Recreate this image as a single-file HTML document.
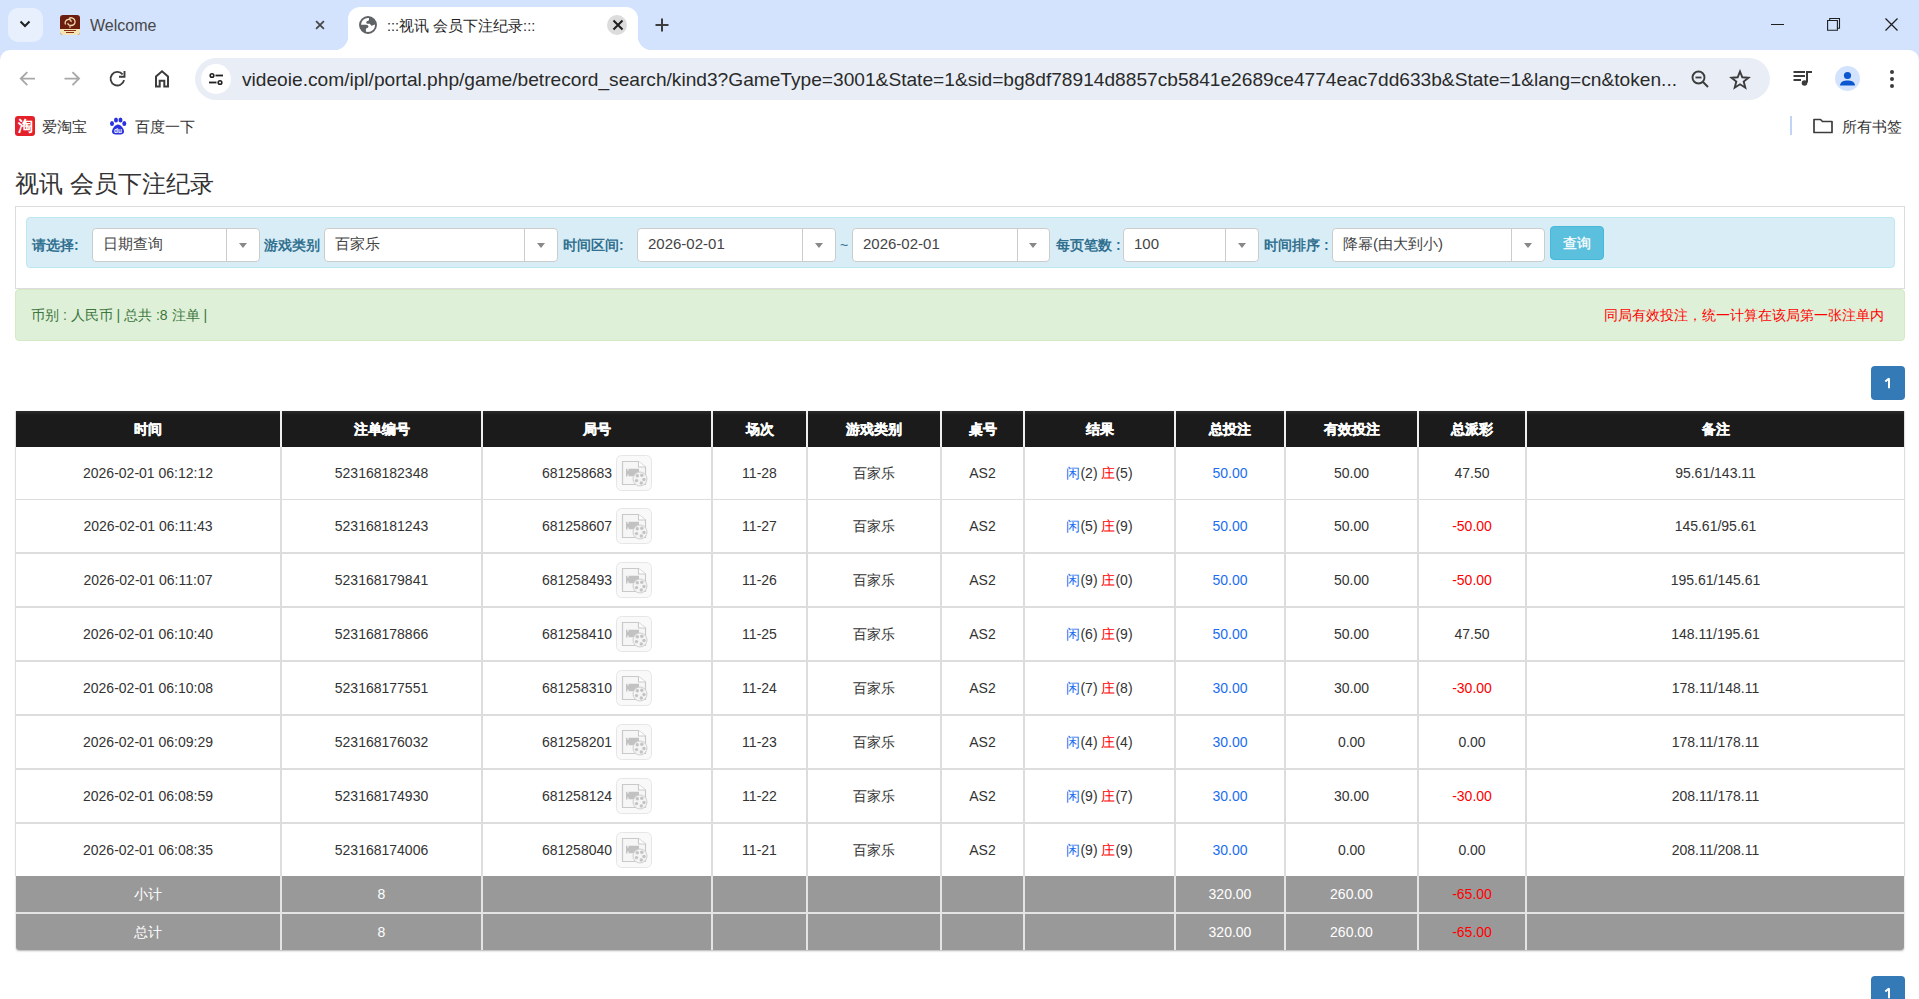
<!DOCTYPE html>
<html><head><meta charset="utf-8">
<style>
*{box-sizing:border-box;margin:0;padding:0}
html,body{width:1919px;height:999px;overflow:hidden;background:#fff;font-family:"Liberation Sans",sans-serif;color:#333}
.a{position:absolute}
#tabs{left:0;top:0;width:1919px;height:50px;background:#d3e3fd}
.ui{font-family:"Liberation Sans",sans-serif;white-space:nowrap}
</style></head><body>
<!-- ===== Browser chrome ===== -->
<div id="tabs" class="a" style="height:62px"></div>
<div class="a" style="left:0;top:50px;width:1919px;height:20px;background:#fff;border-radius:10px 10px 0 0"></div>
<!-- tab dropdown -->
<div class="a" style="left:8px;top:8px;width:35px;height:34px;border-radius:10px;background:#e8f0fe"></div>
<svg class="a" style="left:17px;top:16px" width="16" height="16" viewBox="0 0 16 16"><path d="M3.5 5.5 L8 10 L12.5 5.5" fill="none" stroke="#1f1f1f" stroke-width="2"/></svg>
<!-- welcome favicon -->
<div class="a" style="left:60px;top:15px;width:20px;height:20px;border-radius:3px;background:#6b1d0e"></div>
<div class="a" style="left:60px;top:29px;width:20px;height:6px;border-radius:0 0 3px 3px;background:#f3e3b5"></div>
<svg class="a" style="left:60px;top:15px" width="20" height="20" viewBox="0 0 20 20"><path d="M5.5 9.5C4.5 7.5 5.5 5 8 4.5C10 4 11.5 5.5 11 7M9 3.5C11 2 14.5 3 15 6C15.5 8.5 13.5 10.5 11 10.5C9 10.5 7.5 9.5 8 8" fill="none" stroke="#f0d9b0" stroke-width="1.3"/><path d="M10 10.5V13" stroke="#f0d9b0" stroke-width="1"/><path d="M4 15.5H16M6 17.5H14" stroke="#8a2a10" stroke-width="1"/></svg>
<div class="a ui" style="left:90px;top:17px;font-size:16px;color:#474747">Welcome</div>
<svg class="a" style="left:312px;top:17px" width="16" height="16" viewBox="0 0 16 16"><path d="M4.1 4.1L11.9 11.9M11.9 4.1L4.1 11.9" stroke="#474747" stroke-width="1.8"/></svg>
<!-- active tab -->
<div class="a" style="left:348px;top:7px;width:290px;height:43px;background:#fff;border-radius:12px 12px 0 0"></div>
<div class="a" style="left:334px;top:36px;width:14px;height:14px;background:radial-gradient(circle at 0 0,#d3e3fd 14px,#fff 14.5px)"></div>
<div class="a" style="left:638px;top:36px;width:14px;height:14px;background:radial-gradient(circle at 100% 0,#d3e3fd 14px,#fff 14.5px)"></div>

<!-- globe -->
<svg class="a" style="left:356px;top:13px" width="24" height="24" viewBox="0 0 24 24"><defs><clipPath id="gc"><circle cx="12" cy="12" r="8"/></clipPath></defs><circle cx="12" cy="12" r="8" fill="#fff" stroke="#5f6368" stroke-width="1.9"/><g clip-path="url(#gc)" fill="#5f6368"><path d="M13 2V6.6C13 7.5 12.5 7.9 11.7 7.9C10.9 7.9 10.3 8.6 10.3 9.4C10.3 10.2 11 10.7 11.8 10.7H13.2C14 10.7 14.4 11.2 14.6 11.8C14.9 12.5 15.6 12.8 16.4 12.6C18 12.2 19.5 11.5 21 10.5V2Z"/><path d="M2 11.8H10.2C11.4 11.8 12.4 12.5 12.4 13.6C12.4 14.6 11.6 15.2 10.8 15.2C10.1 15.2 9.9 15.9 9.9 16.6V22H2Z"/></g></svg>
<div class="a ui" style="left:387px;top:16.5px;font-size:14.5px;color:#1f1f1f">:::视讯 会员下注纪录:::</div>
<div class="a" style="left:607px;top:15px;width:20px;height:20px;border-radius:10px;background:#dcdcdc"></div>
<svg class="a" style="left:610px;top:17px" width="16" height="16" viewBox="0 0 16 16"><path d="M3.5 3.5L12.5 12.5M12.5 3.5L3.5 12.5" stroke="#1f1f1f" stroke-width="2"/></svg>
<svg class="a" style="left:654px;top:17px" width="16" height="16" viewBox="0 0 16 16"><path d="M8 1.5V14.5M1.5 8H14.5" stroke="#3c3c3c" stroke-width="2"/></svg>
<!-- window controls -->
<div class="a" style="left:1771px;top:24px;width:13px;height:1px;background:#1f1f1f"></div>
<svg class="a" style="left:1825px;top:16px" width="17" height="17" viewBox="0 0 17 17"><path d="M2.6 4.5H12.4V14.3H2.6Z" fill="none" stroke="#1f1f1f" stroke-width="1.1"/><path d="M4.7 4.5V2.5H14.5V12.2H12.4" fill="none" stroke="#1f1f1f" stroke-width="1.1"/></svg>
<svg class="a" style="left:1883px;top:16px" width="17" height="17" viewBox="0 0 17 17"><path d="M2.5 2.5L14.5 14.5M14.5 2.5L2.5 14.5" stroke="#1f1f1f" stroke-width="1.3"/></svg>
<!-- toolbar -->
<svg class="a" style="left:17px;top:68px" width="20" height="20" viewBox="0 0 20 20"><path d="M18 10.6H4.3M10.3 4.1L3.8 10.6L10.3 17.1" fill="none" stroke="#a8a8a8" stroke-width="1.9"/></svg>
<svg class="a" style="left:61px;top:68px" width="20" height="20" viewBox="0 0 20 20"><path d="M3.5 10.6H17.5M11.5 4.1L18 10.6L11.5 17.1" fill="none" stroke="#a8a8a8" stroke-width="1.9"/></svg>
<svg class="a" style="left:107px;top:68px" width="20" height="20" viewBox="0 0 20 20"><path d="M17.05 12.1 A6.8 6.8 0 1 1 15.6 6.33" fill="none" stroke="#3c3c3c" stroke-width="1.9"/><path d="M12 8.8H17.5V3" fill="none" stroke="#3c3c3c" stroke-width="1.9"/></svg>
<svg class="a" style="left:152px;top:68px" width="20" height="22" viewBox="0 0 20 22"><path d="M4 18.6V8.5L10 3.3L16 8.5V18.6H12.3V12.7H7.7V18.6Z" fill="none" stroke="#3c3c3c" stroke-width="2" stroke-linejoin="miter"/></svg>
<div class="a" style="left:195px;top:58px;width:1575px;height:42px;border-radius:21px;background:#e9eef6"></div>
<div class="a" style="left:201px;top:64px;width:30px;height:30px;border-radius:15px;background:#fff"></div>
<svg class="a" style="left:206px;top:69px" width="20" height="20" viewBox="0 0 20 20"><circle cx="6" cy="6.5" r="1.8" fill="none" stroke="#1f1f1f" stroke-width="1.6"/><path d="M9.5 6.5H17" stroke="#1f1f1f" stroke-width="1.8"/><circle cx="14" cy="13.5" r="1.8" fill="none" stroke="#1f1f1f" stroke-width="1.6"/><path d="M3 13.5H10.5" stroke="#1f1f1f" stroke-width="1.8"/></svg>
<div class="a ui" style="left:242px;top:69px;font-size:19.15px;color:#2a2a2a">videoie.com/ipl/portal.php/game/betrecord_search/kind3?GameType=3001&amp;State=1&amp;sid=bg8df78914d8857cb5841e2689ce4774eac7dd633b&amp;State=1&amp;lang=cn&amp;token...</div>
<svg class="a" style="left:1688px;top:67px" width="24" height="24" viewBox="0 0 24 24"><circle cx="10.5" cy="10.5" r="6" fill="none" stroke="#3c3c3c" stroke-width="1.9"/><path d="M7.5 10.5H13.5" stroke="#3c3c3c" stroke-width="1.8"/><path d="M15 15L20 20" stroke="#3c3c3c" stroke-width="2"/></svg>
<svg class="a" style="left:1729px;top:69px" width="22" height="22" viewBox="0 0 22 22"><path d="M11 2.5L13.3 8.3L19.5 8.7L14.7 12.6L16.3 18.7L11 15.3L5.7 18.7L7.3 12.6L2.5 8.7L8.7 8.3Z" fill="none" stroke="#3c3c3c" stroke-width="1.9" stroke-linejoin="miter"/></svg>
<svg class="a" style="left:1792px;top:69px" width="22" height="20" viewBox="0 0 22 20"><path d="M1.5 3H13M1.5 7H13M1.5 11H9" stroke="#3c3c3c" stroke-width="1.9"/><path d="M15 13.5V3H20" fill="none" stroke="#3c3c3c" stroke-width="2"/><circle cx="12.5" cy="14" r="2.8" fill="#3c3c3c"/></svg>
<div class="a" style="left:1835px;top:66px;width:25px;height:25px;border-radius:13px;background:#d3e3fd"></div>
<svg class="a" style="left:1835px;top:66px" width="25" height="25" viewBox="0 0 25 25"><circle cx="12.5" cy="9.5" r="3.6" fill="#0b57d0"/><path d="M5 19.5C5 15.8 9 14.5 12.5 14.5S20 15.8 20 19.5Z" fill="#0b57d0"/></svg>
<div class="a" style="left:1890px;top:70px;width:4px;height:4px;border-radius:2px;background:#3c3c3c"></div>
<div class="a" style="left:1890px;top:77px;width:4px;height:4px;border-radius:2px;background:#3c3c3c"></div>
<div class="a" style="left:1890px;top:84px;width:4px;height:4px;border-radius:2px;background:#3c3c3c"></div>
<!-- bookmarks -->
<div class="a" style="left:15px;top:116px;width:20px;height:20px;border-radius:3px;background:#e4212b"></div>
<div class="a ui" style="left:17px;top:116px;width:16px;font-size:15px;line-height:20px;color:#fff;font-weight:bold;text-align:center">淘</div>
<div class="a ui" style="left:42px;top:118px;font-size:15px;color:#333">爱淘宝</div>
<svg class="a" style="left:108px;top:116px" width="20" height="20" viewBox="0 0 20 20"><ellipse cx="4" cy="7.5" rx="2" ry="2.6" fill="#2932e1"/><ellipse cx="8" cy="4" rx="2" ry="2.6" fill="#2932e1"/><ellipse cx="12.5" cy="4" rx="2" ry="2.6" fill="#2932e1"/><ellipse cx="16.3" cy="7.5" rx="2" ry="2.6" fill="#2932e1"/><path d="M10 8.5C7 8.5 4 13 4 15.5C4 18 6 18.6 10 18.6S16 18 16 15.5C16 13 13 8.5 10 8.5Z" fill="#2932e1"/><text x="10" y="17.3" font-size="6.5" font-family="Liberation Sans" font-weight="bold" fill="#fff" text-anchor="middle">du</text></svg>
<div class="a ui" style="left:135px;top:118px;font-size:15px;color:#333">百度一下</div>
<div class="a" style="left:1790px;top:116px;width:2px;height:19px;background:#c2d4f5"></div>
<svg class="a" style="left:1812px;top:116px" width="22" height="20" viewBox="0 0 22 20"><path d="M2 3.5H8.5L10.5 5.5H20V16.5H2Z" fill="none" stroke="#3c3c3c" stroke-width="1.7" stroke-linejoin="round"/></svg>
<div class="a ui" style="left:1842px;top:118px;font-size:15px;color:#333">所有书签</div>
<style>
.pg{white-space:nowrap}
.lbl{font-size:14px;font-weight:bold;color:#31708f}
.sel{background:#fff;border:1px solid #ccc;border-radius:4px}
.sel .sd{position:absolute;top:0;width:1px;height:32px;background:#ccc}
.sel span{position:absolute;left:10px;top:6px;font-size:15px;color:#444;white-space:nowrap}
.sel i{position:absolute;top:14px;width:0;height:0;border-left:4px solid transparent;border-right:4px solid transparent;border-top:5px solid #888}
.c{text-align:center;font-size:14px;line-height:20px;color:#333;white-space:nowrap}
.hd{color:#fff;font-weight:bold;-webkit-text-stroke:0.35px #fff}
.w{color:#fff}
.bl{color:#1a6ef2;font-weight:normal}
.rd{color:#ff0000;font-weight:normal}
</style>
<!-- ===== PAGE ===== -->
<div class="a pg" style="left:15px;top:169px;font-size:24px;line-height:30px;color:#333">视讯 会员下注纪录</div>
<div class="a" style="left:15px;top:206px;width:1890px;height:83px;border:1px solid #ddd"></div>
<div class="a" style="left:26px;top:217px;width:1869px;height:51px;border:1px solid #bce8f1;background:#d9edf7;border-radius:4px"></div>
<div class="a pg lbl" style="left:32px;top:237px">请选择:</div>
<div class="a sel" style="left:92px;top:228px;width:168px;height:34px"><div class="sd" style="left:133px"></div><span>日期查询</span><i style="left:146px"></i></div>
<div class="a pg lbl" style="left:264px;top:237px">游戏类别</div>
<div class="a sel" style="left:324px;top:228px;width:234px;height:34px"><div class="sd" style="left:199px"></div><span>百家乐</span><i style="left:212px"></i></div>
<div class="a pg lbl" style="left:563px;top:237px">时间区间:</div>
<div class="a sel" style="left:637px;top:228px;width:199px;height:34px"><div class="sd" style="left:164px"></div><span>2026-02-01</span><i style="left:177px"></i></div>
<div class="a pg" style="left:840px;top:237px;font-size:14px;color:#31708f">~</div>
<div class="a sel" style="left:852px;top:228px;width:198px;height:34px"><div class="sd" style="left:164px"></div><span>2026-02-01</span><i style="left:176px"></i></div>
<div class="a pg lbl" style="left:1056px;top:237px">每页笔数 :</div>
<div class="a sel" style="left:1123px;top:228px;width:136px;height:34px"><div class="sd" style="left:101px"></div><span>100</span><i style="left:114px"></i></div>
<div class="a pg lbl" style="left:1264px;top:237px">时间排序 :</div>
<div class="a sel" style="left:1332px;top:228px;width:213px;height:34px"><div class="sd" style="left:178px"></div><span>降幂(由大到小)</span><i style="left:191px"></i></div>
<div class="a" style="left:1550px;top:226px;width:54px;height:34px;border-radius:4px;background:#5bc0de;border:1px solid #46b8da;color:#fff;font-size:14px;line-height:32px;text-align:center;-webkit-text-stroke:0.3px #fff;padding-right:1px">查询</div>
<div class="a" style="left:15px;top:289px;width:1890px;height:52px;border:1px solid #d6e9c6;background:#dff0d8;border-radius:4px"></div>
<div class="a pg" style="left:31px;top:307px;font-size:14px;color:#3c763d">币别 : 人民币 | 总共 :8 注单 |</div>
<div class="a pg" style="left:1604px;top:307px;font-size:14px;color:#ff0000">同局有效投注，统一计算在该局第一张注单内</div>
<div class="a" style="left:1871px;top:366px;width:34px;height:34px;border-radius:4px;background:#337ab7"><svg width="34" height="34" style="position:absolute;left:0;top:0"><path d="M14.3 15.6 L18 12.4 V22.2" fill="none" stroke="#fff" stroke-width="2" stroke-linejoin="bevel"/></svg></div>
<div class="a" style="left:1871px;top:976px;width:34px;height:34px;border-radius:4px;background:#337ab7"><svg width="34" height="34" style="position:absolute;left:0;top:0"><path d="M14.3 15.6 L18 12.4 V22.2" fill="none" stroke="#fff" stroke-width="2" stroke-linejoin="bevel"/></svg></div>
<div class="a" style="left:16px;top:411px;width:1888px;height:539px;border-radius:0 0 3px 3px;box-shadow:0 1px 2px rgba(0,0,0,.3)"></div>
<div class="a" style="left:15px;top:411px;width:1890px;height:465px;background:#fff;border-left:1px solid #ddd;border-right:1px solid #ddd"></div>
<div class="a" style="left:16px;top:411px;width:1888px;height:36px;background:linear-gradient(#2b2b2b,#1b1b1b 4px)"></div>
<div class="a" style="left:16px;top:876px;width:1888px;height:74px;background:#999;border-radius:0 0 3px 3px"></div>
<div class="a" style="left:16px;top:912px;width:1888px;height:2px;background:#e4e4e4"></div>
<div class="a" style="left:16px;top:499px;width:1888px;height:1px;background:#ddd"></div>
<div class="a" style="left:16px;top:552px;width:1888px;height:2px;background:#ddd"></div>
<div class="a" style="left:16px;top:606px;width:1888px;height:2px;background:#ddd"></div>
<div class="a" style="left:16px;top:660px;width:1888px;height:2px;background:#ddd"></div>
<div class="a" style="left:16px;top:714px;width:1888px;height:2px;background:#ddd"></div>
<div class="a" style="left:16px;top:768px;width:1888px;height:2px;background:#ddd"></div>
<div class="a" style="left:16px;top:822px;width:1888px;height:2px;background:#ddd"></div>
<div class="a" style="left:280px;top:411px;width:2px;height:36px;background:#efefef"></div>
<div class="a" style="left:280px;top:447px;width:2px;height:429px;background:#ddd"></div>
<div class="a" style="left:280px;top:876px;width:2px;height:74px;background:#e4e4e4"></div>
<div class="a" style="left:481px;top:411px;width:2px;height:36px;background:#efefef"></div>
<div class="a" style="left:481px;top:447px;width:2px;height:429px;background:#ddd"></div>
<div class="a" style="left:481px;top:876px;width:2px;height:74px;background:#e4e4e4"></div>
<div class="a" style="left:711px;top:411px;width:2px;height:36px;background:#efefef"></div>
<div class="a" style="left:711px;top:447px;width:2px;height:429px;background:#ddd"></div>
<div class="a" style="left:711px;top:876px;width:2px;height:74px;background:#e4e4e4"></div>
<div class="a" style="left:806px;top:411px;width:2px;height:36px;background:#efefef"></div>
<div class="a" style="left:806px;top:447px;width:2px;height:429px;background:#ddd"></div>
<div class="a" style="left:806px;top:876px;width:2px;height:74px;background:#e4e4e4"></div>
<div class="a" style="left:940px;top:411px;width:2px;height:36px;background:#efefef"></div>
<div class="a" style="left:940px;top:447px;width:2px;height:429px;background:#ddd"></div>
<div class="a" style="left:940px;top:876px;width:2px;height:74px;background:#e4e4e4"></div>
<div class="a" style="left:1023px;top:411px;width:2px;height:36px;background:#efefef"></div>
<div class="a" style="left:1023px;top:447px;width:2px;height:429px;background:#ddd"></div>
<div class="a" style="left:1023px;top:876px;width:2px;height:74px;background:#e4e4e4"></div>
<div class="a" style="left:1174px;top:411px;width:2px;height:36px;background:#efefef"></div>
<div class="a" style="left:1174px;top:447px;width:2px;height:429px;background:#ddd"></div>
<div class="a" style="left:1174px;top:876px;width:2px;height:74px;background:#e4e4e4"></div>
<div class="a" style="left:1284px;top:411px;width:2px;height:36px;background:#efefef"></div>
<div class="a" style="left:1284px;top:447px;width:2px;height:429px;background:#ddd"></div>
<div class="a" style="left:1284px;top:876px;width:2px;height:74px;background:#e4e4e4"></div>
<div class="a" style="left:1417px;top:411px;width:2px;height:36px;background:#efefef"></div>
<div class="a" style="left:1417px;top:447px;width:2px;height:429px;background:#ddd"></div>
<div class="a" style="left:1417px;top:876px;width:2px;height:74px;background:#e4e4e4"></div>
<div class="a" style="left:1525px;top:411px;width:2px;height:36px;background:#efefef"></div>
<div class="a" style="left:1525px;top:447px;width:2px;height:429px;background:#ddd"></div>
<div class="a" style="left:1525px;top:876px;width:2px;height:74px;background:#e4e4e4"></div>
<div class="a c hd" style="left:16px;width:264px;top:419px">时间</div>
<div class="a c hd" style="left:282px;width:199px;top:419px">注单编号</div>
<div class="a c hd" style="left:483px;width:228px;top:419px">局号</div>
<div class="a c hd" style="left:713px;width:93px;top:419px">场次</div>
<div class="a c hd" style="left:808px;width:132px;top:419px">游戏类别</div>
<div class="a c hd" style="left:942px;width:81px;top:419px">桌号</div>
<div class="a c hd" style="left:1025px;width:149px;top:419px">结果</div>
<div class="a c hd" style="left:1176px;width:108px;top:419px">总投注</div>
<div class="a c hd" style="left:1286px;width:131px;top:419px">有效投注</div>
<div class="a c hd" style="left:1419px;width:106px;top:419px">总派彩</div>
<div class="a c hd" style="left:1527px;width:377px;top:419px">备注</div>
<div class="a c" style="left:16px;width:264px;top:463px">2026-02-01 06:12:12</div>
<div class="a c" style="left:282px;width:199px;top:463px">523168182348</div>
<div class="a c" style="left:483px;width:228px;top:463px"><div style="display:flex;justify-content:center;align-items:center;height:20px"><span style="margin-right:4px">681258683</span><span style="position:relative;width:36px;height:36px;flex:none"><svg width="36" height="36" viewBox="0 0 36 36" style="position:absolute;left:0;top:0"><rect x="0.5" y="0.5" width="35" height="35" rx="5" fill="#f9f9f9" stroke="#e6e6e6"/><path d="M6.5 6.5H22.5L29.5 12V29.5H6.5Z" fill="#f6f6f6" stroke="#c9c9c9" stroke-width="1.2"/><path d="M22.5 6.5V12H29.5" fill="#fff" stroke="#c9c9c9" stroke-width="1.1"/><path d="M10 13.8H11.4V15.6H12.6V13.8H23V21.2H12.6V19.6H11.4V21.6H10Z" fill="#c2c2c2"/><circle cx="24" cy="24" r="7" fill="#f4f4f4" stroke="#cfcfcf" stroke-width="1"/><circle cx="21.3" cy="20.8" r="1.7" fill="#c4c4c4"/><circle cx="25.8" cy="20.2" r="1.7" fill="#c4c4c4"/><circle cx="28" cy="24.5" r="1.7" fill="#c4c4c4"/><circle cx="25.3" cy="28" r="1.7" fill="#c4c4c4"/><circle cx="20.5" cy="25.6" r="1.7" fill="#c4c4c4"/></svg></span></div></div>
<div class="a c" style="left:713px;width:93px;top:463px">11-28</div>
<div class="a c" style="left:808px;width:132px;top:463px">百家乐</div>
<div class="a c" style="left:942px;width:81px;top:463px">AS2</div>
<div class="a c" style="left:1025px;width:149px;top:463px"><b class="bl">闲</b>(2) <b class="rd">庄</b>(5)</div>
<div class="a c" style="left:1176px;width:108px;top:463px"><span class="bl">50.00</span></div>
<div class="a c" style="left:1286px;width:131px;top:463px">50.00</div>
<div class="a c" style="left:1419px;width:106px;top:463px">47.50</div>
<div class="a c" style="left:1527px;width:377px;top:463px">95.61/143.11</div>
<div class="a c" style="left:16px;width:264px;top:516px">2026-02-01 06:11:43</div>
<div class="a c" style="left:282px;width:199px;top:516px">523168181243</div>
<div class="a c" style="left:483px;width:228px;top:516px"><div style="display:flex;justify-content:center;align-items:center;height:20px"><span style="margin-right:4px">681258607</span><span style="position:relative;width:36px;height:36px;flex:none"><svg width="36" height="36" viewBox="0 0 36 36" style="position:absolute;left:0;top:0"><rect x="0.5" y="0.5" width="35" height="35" rx="5" fill="#f9f9f9" stroke="#e6e6e6"/><path d="M6.5 6.5H22.5L29.5 12V29.5H6.5Z" fill="#f6f6f6" stroke="#c9c9c9" stroke-width="1.2"/><path d="M22.5 6.5V12H29.5" fill="#fff" stroke="#c9c9c9" stroke-width="1.1"/><path d="M10 13.8H11.4V15.6H12.6V13.8H23V21.2H12.6V19.6H11.4V21.6H10Z" fill="#c2c2c2"/><circle cx="24" cy="24" r="7" fill="#f4f4f4" stroke="#cfcfcf" stroke-width="1"/><circle cx="21.3" cy="20.8" r="1.7" fill="#c4c4c4"/><circle cx="25.8" cy="20.2" r="1.7" fill="#c4c4c4"/><circle cx="28" cy="24.5" r="1.7" fill="#c4c4c4"/><circle cx="25.3" cy="28" r="1.7" fill="#c4c4c4"/><circle cx="20.5" cy="25.6" r="1.7" fill="#c4c4c4"/></svg></span></div></div>
<div class="a c" style="left:713px;width:93px;top:516px">11-27</div>
<div class="a c" style="left:808px;width:132px;top:516px">百家乐</div>
<div class="a c" style="left:942px;width:81px;top:516px">AS2</div>
<div class="a c" style="left:1025px;width:149px;top:516px"><b class="bl">闲</b>(5) <b class="rd">庄</b>(9)</div>
<div class="a c" style="left:1176px;width:108px;top:516px"><span class="bl">50.00</span></div>
<div class="a c" style="left:1286px;width:131px;top:516px">50.00</div>
<div class="a c" style="left:1419px;width:106px;top:516px"><span class="rd">-50.00</span></div>
<div class="a c" style="left:1527px;width:377px;top:516px">145.61/95.61</div>
<div class="a c" style="left:16px;width:264px;top:570px">2026-02-01 06:11:07</div>
<div class="a c" style="left:282px;width:199px;top:570px">523168179841</div>
<div class="a c" style="left:483px;width:228px;top:570px"><div style="display:flex;justify-content:center;align-items:center;height:20px"><span style="margin-right:4px">681258493</span><span style="position:relative;width:36px;height:36px;flex:none"><svg width="36" height="36" viewBox="0 0 36 36" style="position:absolute;left:0;top:0"><rect x="0.5" y="0.5" width="35" height="35" rx="5" fill="#f9f9f9" stroke="#e6e6e6"/><path d="M6.5 6.5H22.5L29.5 12V29.5H6.5Z" fill="#f6f6f6" stroke="#c9c9c9" stroke-width="1.2"/><path d="M22.5 6.5V12H29.5" fill="#fff" stroke="#c9c9c9" stroke-width="1.1"/><path d="M10 13.8H11.4V15.6H12.6V13.8H23V21.2H12.6V19.6H11.4V21.6H10Z" fill="#c2c2c2"/><circle cx="24" cy="24" r="7" fill="#f4f4f4" stroke="#cfcfcf" stroke-width="1"/><circle cx="21.3" cy="20.8" r="1.7" fill="#c4c4c4"/><circle cx="25.8" cy="20.2" r="1.7" fill="#c4c4c4"/><circle cx="28" cy="24.5" r="1.7" fill="#c4c4c4"/><circle cx="25.3" cy="28" r="1.7" fill="#c4c4c4"/><circle cx="20.5" cy="25.6" r="1.7" fill="#c4c4c4"/></svg></span></div></div>
<div class="a c" style="left:713px;width:93px;top:570px">11-26</div>
<div class="a c" style="left:808px;width:132px;top:570px">百家乐</div>
<div class="a c" style="left:942px;width:81px;top:570px">AS2</div>
<div class="a c" style="left:1025px;width:149px;top:570px"><b class="bl">闲</b>(9) <b class="rd">庄</b>(0)</div>
<div class="a c" style="left:1176px;width:108px;top:570px"><span class="bl">50.00</span></div>
<div class="a c" style="left:1286px;width:131px;top:570px">50.00</div>
<div class="a c" style="left:1419px;width:106px;top:570px"><span class="rd">-50.00</span></div>
<div class="a c" style="left:1527px;width:377px;top:570px">195.61/145.61</div>
<div class="a c" style="left:16px;width:264px;top:624px">2026-02-01 06:10:40</div>
<div class="a c" style="left:282px;width:199px;top:624px">523168178866</div>
<div class="a c" style="left:483px;width:228px;top:624px"><div style="display:flex;justify-content:center;align-items:center;height:20px"><span style="margin-right:4px">681258410</span><span style="position:relative;width:36px;height:36px;flex:none"><svg width="36" height="36" viewBox="0 0 36 36" style="position:absolute;left:0;top:0"><rect x="0.5" y="0.5" width="35" height="35" rx="5" fill="#f9f9f9" stroke="#e6e6e6"/><path d="M6.5 6.5H22.5L29.5 12V29.5H6.5Z" fill="#f6f6f6" stroke="#c9c9c9" stroke-width="1.2"/><path d="M22.5 6.5V12H29.5" fill="#fff" stroke="#c9c9c9" stroke-width="1.1"/><path d="M10 13.8H11.4V15.6H12.6V13.8H23V21.2H12.6V19.6H11.4V21.6H10Z" fill="#c2c2c2"/><circle cx="24" cy="24" r="7" fill="#f4f4f4" stroke="#cfcfcf" stroke-width="1"/><circle cx="21.3" cy="20.8" r="1.7" fill="#c4c4c4"/><circle cx="25.8" cy="20.2" r="1.7" fill="#c4c4c4"/><circle cx="28" cy="24.5" r="1.7" fill="#c4c4c4"/><circle cx="25.3" cy="28" r="1.7" fill="#c4c4c4"/><circle cx="20.5" cy="25.6" r="1.7" fill="#c4c4c4"/></svg></span></div></div>
<div class="a c" style="left:713px;width:93px;top:624px">11-25</div>
<div class="a c" style="left:808px;width:132px;top:624px">百家乐</div>
<div class="a c" style="left:942px;width:81px;top:624px">AS2</div>
<div class="a c" style="left:1025px;width:149px;top:624px"><b class="bl">闲</b>(6) <b class="rd">庄</b>(9)</div>
<div class="a c" style="left:1176px;width:108px;top:624px"><span class="bl">50.00</span></div>
<div class="a c" style="left:1286px;width:131px;top:624px">50.00</div>
<div class="a c" style="left:1419px;width:106px;top:624px">47.50</div>
<div class="a c" style="left:1527px;width:377px;top:624px">148.11/195.61</div>
<div class="a c" style="left:16px;width:264px;top:678px">2026-02-01 06:10:08</div>
<div class="a c" style="left:282px;width:199px;top:678px">523168177551</div>
<div class="a c" style="left:483px;width:228px;top:678px"><div style="display:flex;justify-content:center;align-items:center;height:20px"><span style="margin-right:4px">681258310</span><span style="position:relative;width:36px;height:36px;flex:none"><svg width="36" height="36" viewBox="0 0 36 36" style="position:absolute;left:0;top:0"><rect x="0.5" y="0.5" width="35" height="35" rx="5" fill="#f9f9f9" stroke="#e6e6e6"/><path d="M6.5 6.5H22.5L29.5 12V29.5H6.5Z" fill="#f6f6f6" stroke="#c9c9c9" stroke-width="1.2"/><path d="M22.5 6.5V12H29.5" fill="#fff" stroke="#c9c9c9" stroke-width="1.1"/><path d="M10 13.8H11.4V15.6H12.6V13.8H23V21.2H12.6V19.6H11.4V21.6H10Z" fill="#c2c2c2"/><circle cx="24" cy="24" r="7" fill="#f4f4f4" stroke="#cfcfcf" stroke-width="1"/><circle cx="21.3" cy="20.8" r="1.7" fill="#c4c4c4"/><circle cx="25.8" cy="20.2" r="1.7" fill="#c4c4c4"/><circle cx="28" cy="24.5" r="1.7" fill="#c4c4c4"/><circle cx="25.3" cy="28" r="1.7" fill="#c4c4c4"/><circle cx="20.5" cy="25.6" r="1.7" fill="#c4c4c4"/></svg></span></div></div>
<div class="a c" style="left:713px;width:93px;top:678px">11-24</div>
<div class="a c" style="left:808px;width:132px;top:678px">百家乐</div>
<div class="a c" style="left:942px;width:81px;top:678px">AS2</div>
<div class="a c" style="left:1025px;width:149px;top:678px"><b class="bl">闲</b>(7) <b class="rd">庄</b>(8)</div>
<div class="a c" style="left:1176px;width:108px;top:678px"><span class="bl">30.00</span></div>
<div class="a c" style="left:1286px;width:131px;top:678px">30.00</div>
<div class="a c" style="left:1419px;width:106px;top:678px"><span class="rd">-30.00</span></div>
<div class="a c" style="left:1527px;width:377px;top:678px">178.11/148.11</div>
<div class="a c" style="left:16px;width:264px;top:732px">2026-02-01 06:09:29</div>
<div class="a c" style="left:282px;width:199px;top:732px">523168176032</div>
<div class="a c" style="left:483px;width:228px;top:732px"><div style="display:flex;justify-content:center;align-items:center;height:20px"><span style="margin-right:4px">681258201</span><span style="position:relative;width:36px;height:36px;flex:none"><svg width="36" height="36" viewBox="0 0 36 36" style="position:absolute;left:0;top:0"><rect x="0.5" y="0.5" width="35" height="35" rx="5" fill="#f9f9f9" stroke="#e6e6e6"/><path d="M6.5 6.5H22.5L29.5 12V29.5H6.5Z" fill="#f6f6f6" stroke="#c9c9c9" stroke-width="1.2"/><path d="M22.5 6.5V12H29.5" fill="#fff" stroke="#c9c9c9" stroke-width="1.1"/><path d="M10 13.8H11.4V15.6H12.6V13.8H23V21.2H12.6V19.6H11.4V21.6H10Z" fill="#c2c2c2"/><circle cx="24" cy="24" r="7" fill="#f4f4f4" stroke="#cfcfcf" stroke-width="1"/><circle cx="21.3" cy="20.8" r="1.7" fill="#c4c4c4"/><circle cx="25.8" cy="20.2" r="1.7" fill="#c4c4c4"/><circle cx="28" cy="24.5" r="1.7" fill="#c4c4c4"/><circle cx="25.3" cy="28" r="1.7" fill="#c4c4c4"/><circle cx="20.5" cy="25.6" r="1.7" fill="#c4c4c4"/></svg></span></div></div>
<div class="a c" style="left:713px;width:93px;top:732px">11-23</div>
<div class="a c" style="left:808px;width:132px;top:732px">百家乐</div>
<div class="a c" style="left:942px;width:81px;top:732px">AS2</div>
<div class="a c" style="left:1025px;width:149px;top:732px"><b class="bl">闲</b>(4) <b class="rd">庄</b>(4)</div>
<div class="a c" style="left:1176px;width:108px;top:732px"><span class="bl">30.00</span></div>
<div class="a c" style="left:1286px;width:131px;top:732px">0.00</div>
<div class="a c" style="left:1419px;width:106px;top:732px">0.00</div>
<div class="a c" style="left:1527px;width:377px;top:732px">178.11/178.11</div>
<div class="a c" style="left:16px;width:264px;top:786px">2026-02-01 06:08:59</div>
<div class="a c" style="left:282px;width:199px;top:786px">523168174930</div>
<div class="a c" style="left:483px;width:228px;top:786px"><div style="display:flex;justify-content:center;align-items:center;height:20px"><span style="margin-right:4px">681258124</span><span style="position:relative;width:36px;height:36px;flex:none"><svg width="36" height="36" viewBox="0 0 36 36" style="position:absolute;left:0;top:0"><rect x="0.5" y="0.5" width="35" height="35" rx="5" fill="#f9f9f9" stroke="#e6e6e6"/><path d="M6.5 6.5H22.5L29.5 12V29.5H6.5Z" fill="#f6f6f6" stroke="#c9c9c9" stroke-width="1.2"/><path d="M22.5 6.5V12H29.5" fill="#fff" stroke="#c9c9c9" stroke-width="1.1"/><path d="M10 13.8H11.4V15.6H12.6V13.8H23V21.2H12.6V19.6H11.4V21.6H10Z" fill="#c2c2c2"/><circle cx="24" cy="24" r="7" fill="#f4f4f4" stroke="#cfcfcf" stroke-width="1"/><circle cx="21.3" cy="20.8" r="1.7" fill="#c4c4c4"/><circle cx="25.8" cy="20.2" r="1.7" fill="#c4c4c4"/><circle cx="28" cy="24.5" r="1.7" fill="#c4c4c4"/><circle cx="25.3" cy="28" r="1.7" fill="#c4c4c4"/><circle cx="20.5" cy="25.6" r="1.7" fill="#c4c4c4"/></svg></span></div></div>
<div class="a c" style="left:713px;width:93px;top:786px">11-22</div>
<div class="a c" style="left:808px;width:132px;top:786px">百家乐</div>
<div class="a c" style="left:942px;width:81px;top:786px">AS2</div>
<div class="a c" style="left:1025px;width:149px;top:786px"><b class="bl">闲</b>(9) <b class="rd">庄</b>(7)</div>
<div class="a c" style="left:1176px;width:108px;top:786px"><span class="bl">30.00</span></div>
<div class="a c" style="left:1286px;width:131px;top:786px">30.00</div>
<div class="a c" style="left:1419px;width:106px;top:786px"><span class="rd">-30.00</span></div>
<div class="a c" style="left:1527px;width:377px;top:786px">208.11/178.11</div>
<div class="a c" style="left:16px;width:264px;top:840px">2026-02-01 06:08:35</div>
<div class="a c" style="left:282px;width:199px;top:840px">523168174006</div>
<div class="a c" style="left:483px;width:228px;top:840px"><div style="display:flex;justify-content:center;align-items:center;height:20px"><span style="margin-right:4px">681258040</span><span style="position:relative;width:36px;height:36px;flex:none"><svg width="36" height="36" viewBox="0 0 36 36" style="position:absolute;left:0;top:0"><rect x="0.5" y="0.5" width="35" height="35" rx="5" fill="#f9f9f9" stroke="#e6e6e6"/><path d="M6.5 6.5H22.5L29.5 12V29.5H6.5Z" fill="#f6f6f6" stroke="#c9c9c9" stroke-width="1.2"/><path d="M22.5 6.5V12H29.5" fill="#fff" stroke="#c9c9c9" stroke-width="1.1"/><path d="M10 13.8H11.4V15.6H12.6V13.8H23V21.2H12.6V19.6H11.4V21.6H10Z" fill="#c2c2c2"/><circle cx="24" cy="24" r="7" fill="#f4f4f4" stroke="#cfcfcf" stroke-width="1"/><circle cx="21.3" cy="20.8" r="1.7" fill="#c4c4c4"/><circle cx="25.8" cy="20.2" r="1.7" fill="#c4c4c4"/><circle cx="28" cy="24.5" r="1.7" fill="#c4c4c4"/><circle cx="25.3" cy="28" r="1.7" fill="#c4c4c4"/><circle cx="20.5" cy="25.6" r="1.7" fill="#c4c4c4"/></svg></span></div></div>
<div class="a c" style="left:713px;width:93px;top:840px">11-21</div>
<div class="a c" style="left:808px;width:132px;top:840px">百家乐</div>
<div class="a c" style="left:942px;width:81px;top:840px">AS2</div>
<div class="a c" style="left:1025px;width:149px;top:840px"><b class="bl">闲</b>(9) <b class="rd">庄</b>(9)</div>
<div class="a c" style="left:1176px;width:108px;top:840px"><span class="bl">30.00</span></div>
<div class="a c" style="left:1286px;width:131px;top:840px">0.00</div>
<div class="a c" style="left:1419px;width:106px;top:840px">0.00</div>
<div class="a c" style="left:1527px;width:377px;top:840px">208.11/208.11</div>
<div class="a c w" style="left:16px;width:264px;top:884px">小计</div>
<div class="a c w" style="left:282px;width:199px;top:884px">8</div>
<div class="a c w" style="left:1176px;width:108px;top:884px">320.00</div>
<div class="a c w" style="left:1286px;width:131px;top:884px">260.00</div>
<div class="a c w" style="left:1419px;width:106px;top:884px"><span class="rd">-65.00</span></div>
<div class="a c w" style="left:16px;width:264px;top:922px">总计</div>
<div class="a c w" style="left:282px;width:199px;top:922px">8</div>
<div class="a c w" style="left:1176px;width:108px;top:922px">320.00</div>
<div class="a c w" style="left:1286px;width:131px;top:922px">260.00</div>
<div class="a c w" style="left:1419px;width:106px;top:922px"><span class="rd">-65.00</span></div>
</body></html>
